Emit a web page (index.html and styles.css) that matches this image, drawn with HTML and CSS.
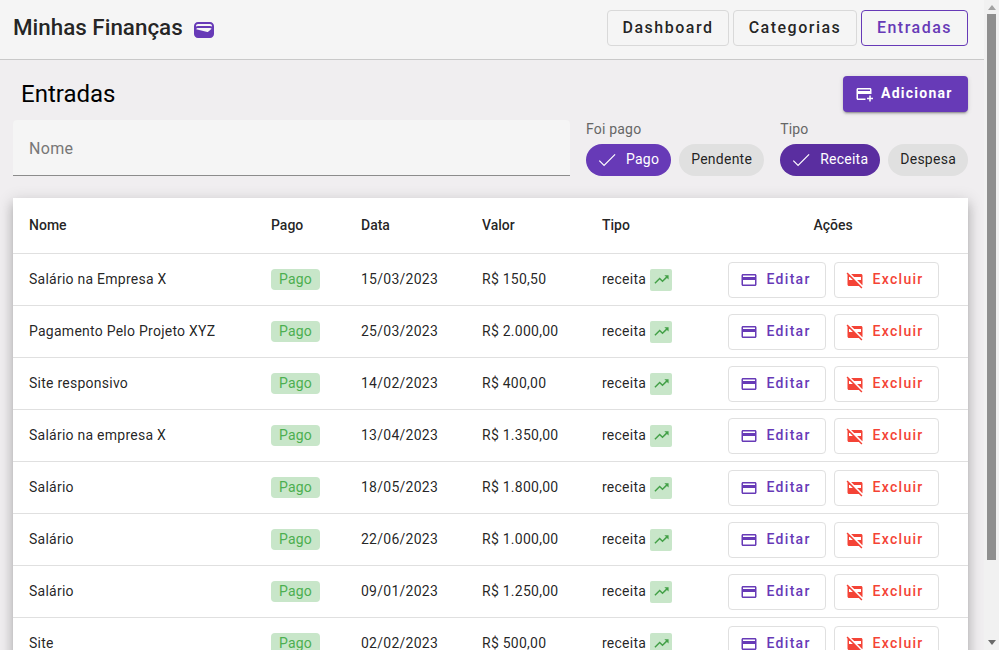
FILE: index.html
```html
<!DOCTYPE html>
<html lang="pt-BR">
<head>
<meta charset="utf-8">
<title>Minhas Finanças</title>
<link rel="stylesheet" href="styles.css">
</head>
<body>
<svg class="defs" width="0" height="0" aria-hidden="true">
  <symbol id="i-card" viewBox="0 0 24 24"><path d="M20 4H4c-1.11 0-1.99.89-1.99 2L2 18c0 1.11.89 2 2 2h16c1.11 0 2-.89 2-2V6c0-1.11-.89-2-2-2zm0 14H4v-6h16v6zm0-10H4V6h16v2z"/></symbol>
  <symbol id="i-off" viewBox="0 0 24 24"><path d="M6.83 4H20c1.11 0 2 .89 2 2v12c0 .34-.08.66-.23.94L14.83 12H20V8h-9.17l-4-4zm13.66 19.31L17.17 20H4c-1.11 0-2-.89-2-2l.01-12c0-.34.08-.66.23-.93L.69 3.51 2.1 2.1l19.8 19.8-1.41 1.41zM9.17 12l-4-4H4v4h5.17z"/></symbol>
  <symbol id="i-up" viewBox="0 0 24 24"><path d="M16 6l2.29 2.29-4.88 4.88-4-4L2 16.59 3.41 18l6-6 4 4 6.3-6.29L22 12V6z"/></symbol>
  <symbol id="i-check" viewBox="0 0 24 24"><path class="check" d="M1.73 12.91 8.1 19.28 22.79 4.59"/></symbol>
</svg>
<div class="page">
<header class="topbar">
  <div class="brand">
    <span class="brand-name">Minhas Finanças</span>
    <svg class="brand-icon" viewBox="0 0 24 24"><path d="M18 4H6C3.79 4 2 5.79 2 8v8c0 2.21 1.79 4 4 4h12c2.21 0 4-1.79 4-4V8c0-2.21-1.79-4-4-4zm-1.86 9.77c-.24.2-.57.28-.88.2L4.15 11.25C4.45 10.52 5.16 10 6 10h12c.67 0 1.26.34 1.63.84l-3.49 2.93zM6 6h12c1.1 0 2 .9 2 2v.55C19.41 8.21 18.73 8 18 8H6c-.73 0-1.41.21-2 .55V8c0-1.1.9-2 2-2z"/></svg>
  </div>
  <nav class="nav">
    <a class="nav-btn">Dashboard</a>
    <a class="nav-btn">Categorias</a>
    <a class="nav-btn active">Entradas</a>
  </nav>
</header>
<main class="content">
  <div class="title-row">
    <h1 class="page-title">Entradas</h1>
    <button class="add-btn"><svg class="add-icon" viewBox="0 0 24 24"><path d="M20 4H4c-1.11 0-1.99.89-1.99 2L2 18c0 1.11.89 2 2 2h10v-2H4v-6h18V6c0-1.11-.89-2-2-2zm0 4H4V6h16v2zm4 9v2h-3v3h-2v-3h-3v-2h3v-3h2v3h3z"/></svg>Adicionar</button>
  </div>
  <div class="filters">
    <div class="field"><span class="field-label">Nome</span></div>
    <div class="chip-group">
      <span class="group-label">Foi pago</span>
      <div class="chips">
        <span class="chip selected"><svg class="chip-check"><use href="#i-check"/></svg>Pago</span>
        <span class="chip">Pendente</span>
      </div>
    </div>
    <div class="chip-group">
      <span class="group-label">Tipo</span>
      <div class="chips">
        <span class="chip selected dark"><svg class="chip-check"><use href="#i-check"/></svg>Receita</span>
        <span class="chip">Despesa</span>
      </div>
    </div>
  </div>
  <table class="table">
    <colgroup><col class="c-nome"><col class="c-pago"><col class="c-data"><col class="c-valor"><col class="c-tipo"><col class="c-acoes"></colgroup>
    <thead>
      <tr><th>Nome</th><th>Pago</th><th>Data</th><th>Valor</th><th>Tipo</th><th class="center">Ações</th></tr>
    </thead>
    <tbody id="rows">
      <tr><td>Salário na Empresa X</td><td><span class="badge">Pago</span></td><td>15/03/2023</td><td>R$ 150,50</td><td><span class="tipo">receita<span class="tipo-icon"><svg><use href="#i-up"/></svg></span></span></td><td><div class="actions"><button class="act edit"><svg><use href="#i-card"/></svg>Editar</button><button class="act del"><svg><use href="#i-off"/></svg>Excluir</button></div></td></tr>
      <tr><td>Pagamento Pelo Projeto XYZ</td><td><span class="badge">Pago</span></td><td>25/03/2023</td><td>R$ 2.000,00</td><td><span class="tipo">receita<span class="tipo-icon"><svg><use href="#i-up"/></svg></span></span></td><td><div class="actions"><button class="act edit"><svg><use href="#i-card"/></svg>Editar</button><button class="act del"><svg><use href="#i-off"/></svg>Excluir</button></div></td></tr>
      <tr><td>Site responsivo</td><td><span class="badge">Pago</span></td><td>14/02/2023</td><td>R$ 400,00</td><td><span class="tipo">receita<span class="tipo-icon"><svg><use href="#i-up"/></svg></span></span></td><td><div class="actions"><button class="act edit"><svg><use href="#i-card"/></svg>Editar</button><button class="act del"><svg><use href="#i-off"/></svg>Excluir</button></div></td></tr>
      <tr><td>Salário na empresa X</td><td><span class="badge">Pago</span></td><td>13/04/2023</td><td>R$ 1.350,00</td><td><span class="tipo">receita<span class="tipo-icon"><svg><use href="#i-up"/></svg></span></span></td><td><div class="actions"><button class="act edit"><svg><use href="#i-card"/></svg>Editar</button><button class="act del"><svg><use href="#i-off"/></svg>Excluir</button></div></td></tr>
      <tr><td>Salário</td><td><span class="badge">Pago</span></td><td>18/05/2023</td><td>R$ 1.800,00</td><td><span class="tipo">receita<span class="tipo-icon"><svg><use href="#i-up"/></svg></span></span></td><td><div class="actions"><button class="act edit"><svg><use href="#i-card"/></svg>Editar</button><button class="act del"><svg><use href="#i-off"/></svg>Excluir</button></div></td></tr>
      <tr><td>Salário</td><td><span class="badge">Pago</span></td><td>22/06/2023</td><td>R$ 1.000,00</td><td><span class="tipo">receita<span class="tipo-icon"><svg><use href="#i-up"/></svg></span></span></td><td><div class="actions"><button class="act edit"><svg><use href="#i-card"/></svg>Editar</button><button class="act del"><svg><use href="#i-off"/></svg>Excluir</button></div></td></tr>
      <tr><td>Salário</td><td><span class="badge">Pago</span></td><td>09/01/2023</td><td>R$ 1.250,00</td><td><span class="tipo">receita<span class="tipo-icon"><svg><use href="#i-up"/></svg></span></span></td><td><div class="actions"><button class="act edit"><svg><use href="#i-card"/></svg>Editar</button><button class="act del"><svg><use href="#i-off"/></svg>Excluir</button></div></td></tr>
      <tr><td>Site</td><td><span class="badge">Pago</span></td><td>02/02/2023</td><td>R$ 500,00</td><td><span class="tipo">receita<span class="tipo-icon"><svg><use href="#i-up"/></svg></span></span></td><td><div class="actions"><button class="act edit"><svg><use href="#i-card"/></svg>Editar</button><button class="act del"><svg><use href="#i-off"/></svg>Excluir</button></div></td></tr>
    </tbody>
  </table>
</main>
</div>
<aside class="scrollbar" aria-hidden="true">
  <span class="arrow arrow-up"></span>
  <span class="thumb"></span>
  <span class="track"></span>
  <span class="arrow arrow-down"></span>
</aside>
</body>
</html>
```
FILE: styles.css
```css
* { box-sizing: border-box; }
html { background: #f0eef0; }
body { margin: 0; height: 650px; overflow: hidden; display: flex; font-family: Roboto, "Liberation Sans", sans-serif; color: rgba(0,0,0,.87); background: #f0eef0; }
.defs { position: absolute; }
.page { width: 984px; height: 650px; overflow: hidden; flex: none; }
.scrollbar { flex: 1; background: #f1f1f1; display: flex; flex-direction: column; align-items: center; }
.arrow { flex: none; width: 0; height: 0; border-left: 4.5px solid transparent; border-right: 4.5px solid transparent; }
.arrow-up { border-bottom: 5px solid #a3a3a3; margin: 5px 0 4px; }
.arrow-down { border-top: 5px solid #6a6a6a; margin: 4px 0 5px; }
.thumb { flex: none; width: 9px; height: 546px; background: #8f8f8f; }
.track { flex: 1; }
.topbar { height: 60px; background: #f5f5f5; border-bottom: 1px solid #c9c9c9; display: flex; align-items: center; justify-content: space-between; padding: 0 16px 3px 13px; }
.brand { display: flex; align-items: center; gap: 9px; }
.brand-name { font-size: 22.4px; font-weight: 500; color: rgba(0,0,0,.87); margin-bottom: 2px; }
.brand-icon { width: 24px; height: 24px; fill: #673ab7; margin-top: 4px; }
.nav { display: flex; gap: 4px; }
.nav-btn { height: 36px; display: flex; align-items: center; justify-content: center; border: 1px solid #d9d9d9; border-radius: 4px; padding-bottom: 2px; font-size: 16px; font-weight: 500; letter-spacing: 1.5px; width: 122px; color: rgba(0,0,0,.87); }
.nav-btn:nth-child(2) { width: 124px; }
.nav-btn.active { width: 107px; border-color: #673ab7; color: #673ab7; }
.content { padding: 16px 16px 16px 13px; }
.title-row { display: flex; justify-content: space-between; align-items: center; height: 36px; padding-left: 8px; margin-bottom: 8px; }
.page-title { margin: 0; font-size: 24px; font-weight: 400; color: #000; }
.add-btn { height: 36px; width: 125px; display: flex; align-items: center; gap: 8px; border: 0; border-radius: 4px; background: #673ab7; color: #fff; font-family: inherit; font-size: 14px; font-weight: 700; letter-spacing: 1.25px; box-shadow: 0 3px 1px -2px rgba(0,0,0,.2), 0 2px 2px rgba(0,0,0,.14), 0 1px 5px rgba(0,0,0,.12); padding: 0 0 2px 12px; }
.add-icon { width: 18px; height: 18px; fill: #fff; margin-top: 2px; }
.filters { display: flex; align-items: flex-end; margin-bottom: 22px; }
.field { width: 557px; height: 56px; background: #f5f5f5; border-bottom: 1px solid #8c8c8c; border-radius: 4px 4px 0 0; display: flex; align-items: center; padding: 1px 16px 0; margin-right: 16px; }
.field-label { font-size: 16px; color: #777; letter-spacing: .3px; }
.chip-group { display: flex; flex-direction: column; gap: 6px; margin-right: 16px; }
.chip-group:last-child { margin-right: 0; }
.group-label { font-size: 14px; line-height: 17px; color: #666; letter-spacing: .2px; }
.chips { display: flex; gap: 8px; }
.chip { height: 32px; border-radius: 16px; background: #e0e0e0; padding: 0 12px 2px; display: flex; align-items: center; font-size: 14px; letter-spacing: .25px; color: rgba(0,0,0,.87); }
.chip.selected { background: #673ab7; color: #fff; }
.chip.dark { background: #5a2ea0; }
.chip-check { width: 18px; height: 18px; margin-right: 10px; margin-top: 2px; }
.check { fill: none; stroke: #fff; stroke-width: 1.6; }
.table { width: 955px; table-layout: fixed; border-collapse: collapse; background: #fff; box-shadow: 0 5px 5px -3px rgba(0,0,0,.2), 0 8px 10px 1px rgba(0,0,0,.14), 0 3px 14px 2px rgba(0,0,0,.12); }
.c-nome { width: 242px; }
.c-pago { width: 90px; }
.c-data { width: 121px; }
.c-valor { width: 120px; }
.c-tipo { width: 112px; }
th, td { border-bottom: 1px solid #e0e0e0; padding: 0 16px; font-size: 14px; text-align: left; white-space: nowrap; }
th { height: 55px; font-weight: 500; }
td { height: 52px; letter-spacing: .25px; }
th.center { text-align: center; }
td:last-child { padding: 1px 0 0; }
.badge { display: inline-block; width: 49px; height: 21px; line-height: 21px; text-align: center; border-radius: 4px; background: #c8e6c9; color: #4caf50; font-size: 14px; vertical-align: middle; }
.tipo { display: flex; align-items: center; gap: 4px; }
.tipo-icon { width: 22px; height: 22px; border-radius: 2px; background: #c8e6c9; display: flex; align-items: center; justify-content: center; margin-top: 1px; }
.tipo-icon svg { width: 17px; height: 17px; fill: #43a047; }
.actions { display: flex; justify-content: center; gap: 8px; }
.act { height: 36px; display: flex; align-items: center; gap: 9px; background: #fff; border: 1px solid #e0e0e0; border-radius: 4px; font-family: inherit; font-size: 14px; font-weight: 500; letter-spacing: 1.3px; padding: 0 0 2px 11px; }
.act svg { width: 18px; height: 18px; fill: currentColor; margin-top: 2px; }
.edit { width: 98px; color: #673ab7; }
.del { width: 105px; color: #f44336; }
```
